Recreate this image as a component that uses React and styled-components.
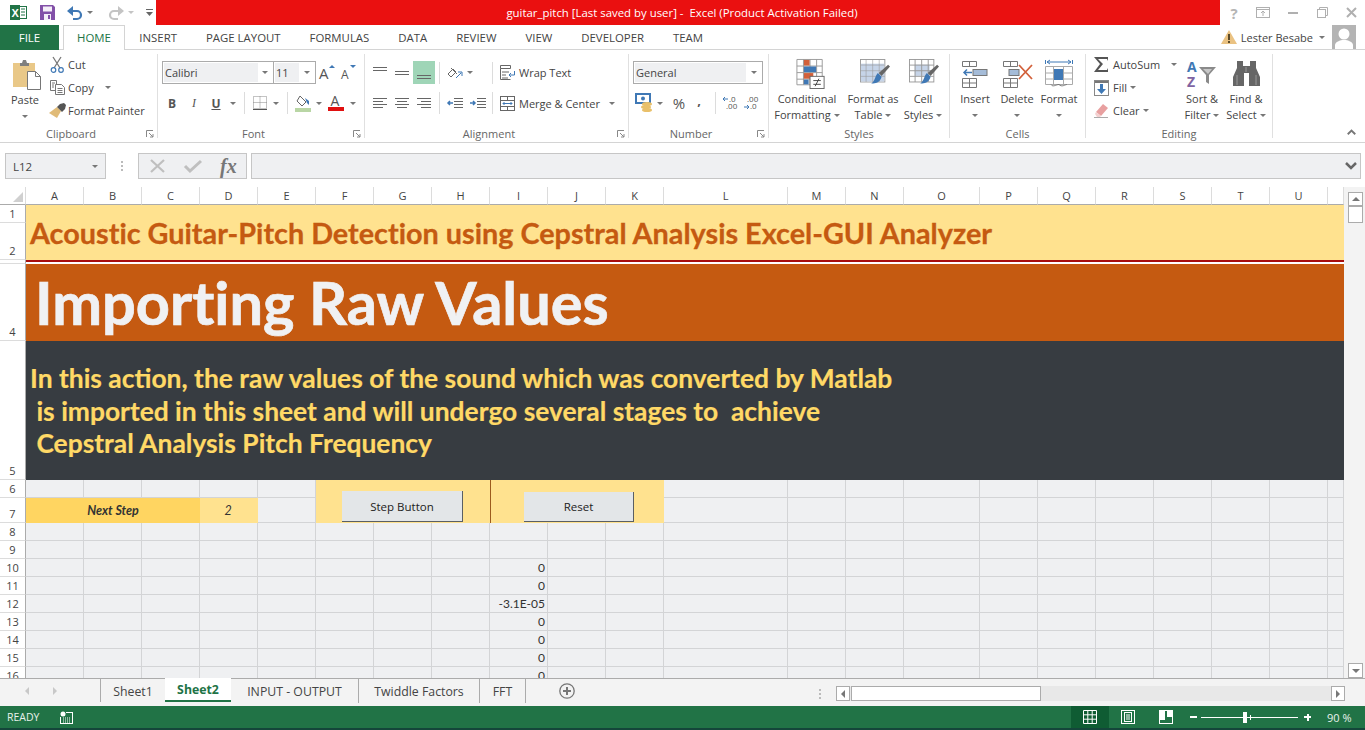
import styled, { createGlobalStyle } from 'styled-components';

const UI = '"Open Sans", "Liberation Sans", sans-serif';
const SHEET = 'Lato, "Liberation Sans", sans-serif';

const GlobalStyle = createGlobalStyle`
  html, body {
    margin: 0;
    background: #ffffff;
    overflow: hidden;
  }
  * {
    box-sizing: border-box;
  }
  svg {
    display: block;
    flex: none;
    overflow: visible;
  }
`;

const Page = styled.div`
  width: 1365px;
  height: 730px;
  display: flex;
  flex-direction: column;
  font-family: ${UI};
  font-size: 11px;
  color: #444;
`;

/* ---------- title bar ---------- */
const TitleBar = styled.div`
  height: 25px;
  display: flex;
  flex: none;
`;
const QuickAccess = styled.div`
  width: 156px;
  display: flex;
  align-items: center;
  padding-left: 10px;
`;
const RedTitle = styled.div`
  flex: 1;
  background: #ea1010;
  color: #fff;
  font-size: 11.4px;
  text-align: center;
  line-height: 26px;
  padding-right: 12px;
  white-space: pre;
`;
const WindowControls = styled.div`
  width: 145px;
  display: flex;
  align-items: center;
  padding-left: 0;
`;
const Slot = styled.div`
  width: ${(p) => p.$w}px;
  height: ${(p) => (p.$h ? `${p.$h}px` : 'auto')};
  display: flex;
  justify-content: center;
  align-items: center;
  flex: none;
  background: ${(p) => (p.$active ? '#9fd5b7' : 'transparent')};
  align-self: stretch;
`;
const Caret = styled.i`
  display: inline-block;
  width: 0;
  height: 0;
  flex: none;
  border-left: 3px solid transparent;
  border-right: 3px solid transparent;
  border-top: 3px solid ${(p) => p.$color || '#777'};
  margin-left: ${(p) => p.$ml || 0}px;
`;

/* ---------- tabs ---------- */
const TabRow = styled.div`
  height: 25px;
  flex: none;
  display: flex;
  border-bottom: 1px solid #d4d4d4;
  position: relative;
`;
const FileTab = styled.div`
  width: 59px;
  height: 25px;
  background: #217346;
  color: #fff;
  font-size: 11.5px;
  text-align: center;
  line-height: 25px;
  margin-right: 4px;
`;
const Tab = styled.div`
  height: ${(p) => (p.$active ? '25px' : '24px')};
  padding: 0 ${(p) => (p.$active ? 13 : 14.5)}px;
  font-size: 11.4px;
  color: ${(p) => (p.$active ? '#217346' : '#444')};
  background: #fff;
  border: ${(p) => (p.$active ? '1px solid #d4d4d4' : '0')};
  border-bottom: 0;
  line-height: ${(p) => (p.$active ? '24px' : '25px')};
  position: relative;
  z-index: 1;
`;
const UserBox = styled.div`
  margin-left: auto;
  display: flex;
  align-items: center;
  height: 24px;
  padding-right: 9px;
  font-size: 11px;
`;
const UserName = styled.span`
  margin: 0 6px 0 4px;
`;

/* ---------- ribbon ---------- */
const Ribbon = styled.div`
  height: 93px;
  flex: none;
  display: flex;
  border-bottom: 1px solid #d4d4d4;
`;
const Group = styled.section`
  width: ${(p) => p.$w}px;
  height: 84px;
  margin-top: 4px;
  border-right: 1px solid #e0e0e0;
  display: flex;
  flex-direction: column;
  flex: none;
`;
const GroupBody = styled.div`
  height: 73px;
  flex: none;
  display: flex;
`;
const GroupLabel = styled.div`
  position: relative;
  height: 14px;
  line-height: 14px;
  text-align: center;
  font-size: 11px;
  color: #666;
  padding-right: ${(p) => (p.$launcher ? 15 : 0)}px;
`;
const Launcher = styled.span`
  position: absolute;
  right: 3px;
  top: 3px;
`;
const Stack = styled.div`
  width: ${(p) => p.$w}px;
  flex: none;
  margin-top: -1px;
  margin-left: ${(p) => p.$ml || 0}px;
  display: flex;
  flex-direction: column;
`;
const StackRow = styled.div`
  height: 23px;
  display: flex;
  align-items: center;
  font-size: 11px;
  white-space: nowrap;
`;
const StackIcon = styled.div`
  width: ${(p) => p.$w || 18}px;
  display: flex;
  justify-content: center;
  margin-right: 3px;
`;
const TwoRows = styled.div`
  padding: 7px 0 0 ${(p) => p.$pl || 0}px;
  display: flex;
  flex-direction: column;
  gap: 8px;
  flex: 1;
`;
const Row = styled.div`
  height: ${(p) => p.$h || 23}px;
  display: flex;
  align-items: center;
  white-space: nowrap;
`;
const Combo = styled.div`
  width: ${(p) => p.$w}px;
  height: 23px;
  flex: none;
  border: 1px solid #ababab;
  margin-right: ${(p) => p.$mr || 0}px;
  display: flex;
  align-items: center;
  padding: 1px;
`;
const ComboField = styled.div`
  flex: 1;
  height: 19px;
  background: #eff0f2;
  line-height: 20px;
  padding-left: 1px;
  font-size: 11px;
`;
const ComboArrow = styled.div`
  width: ${(p) => p.$w || 15}px;
  display: flex;
  justify-content: center;
`;
const Divider = styled.div`
  width: ${(p) => p.$w}px;
  height: 22px;
  flex: none;
  display: flex;
  justify-content: center;
  &::before {
    content: '';
    width: 1px;
    background: #dcdcdc;
  }
`;
const Glyph = styled.span`
  font-family: ${(p) => p.$font || 'inherit'};
  font-size: ${(p) => p.$size || 12}px;
  font-weight: ${(p) => (p.$bold ? 700 : 400)};
  font-style: ${(p) => (p.$italic ? 'italic' : 'normal')};
  text-decoration: ${(p) => (p.$under ? 'underline' : 'none')};
  color: ${(p) => p.$color || '#555'};
  padding-bottom: ${(p) => p.$raise || 0}px;
`;
const BigButton = styled.div`
  width: ${(p) => p.$w}px;
  flex: none;
  display: flex;
  flex-direction: column;
  align-items: center;
  padding-top: ${(p) => p.$pt || 2}px;
  font-size: 11px;
  text-align: center;
`;
const BigIcon = styled.div`
  height: 35px;
  display: flex;
  align-items: center;
  justify-content: center;
  padding-left: ${(p) => p.$pl || 0}px;
`;
const BigLine = styled.div`
  height: 16px;
  line-height: 16px;
  display: flex;
  align-items: center;
  justify-content: center;
  gap: 3px;
  white-space: nowrap;
`;
const Collapse = styled.div`
  flex: 1;
  display: flex;
  justify-content: flex-end;
  align-items: flex-end;
  padding: 0 9px 6px 0;
`;

/* ---------- formula bar ---------- */
const FormulaBar = styled.div`
  height: 26px;
  margin: 10px 4px 8px 5px;
  flex: none;
  display: flex;
  align-items: stretch;
`;
const NameBox = styled.div`
  width: 101px;
  background: #eff0f2;
  border: 1px solid #c6c6c6;
  display: flex;
  align-items: center;
  justify-content: space-between;
  padding: 0 7px 0 7px;
  font-size: 11.5px;
`;
const Grip = styled.div`
  width: 32px;
  display: flex;
  flex-direction: column;
  align-items: center;
  justify-content: center;
  gap: 2px;
  i {
    width: 2px;
    height: 2px;
    background: #bbb;
  }
`;
const FxBox = styled.div`
  width: 109px;
  background: #eff0f2;
  border: 1px solid #c6c6c6;
  display: flex;
  align-items: center;
  padding-left: 1px;
  margin-right: 4px;
`;
const FxCell = styled.div`
  width: 35.5px;
  display: flex;
  justify-content: center;
  align-items: center;
`;
const FormulaInput = styled.div`
  flex: 1;
  background: #eff0f2;
  border: 1px solid #c6c6c6;
  display: flex;
  align-items: center;
  justify-content: flex-end;
  padding-right: 3px;
`;

/* ---------- sheet ---------- */
const SheetArea = styled.div`
  height: 492px;
  flex: none;
  display: flex;
  overflow: hidden;
  border-bottom: 1px solid #ababab;
`;
const Grid = styled.div`
  width: 1344px;
  display: grid;
  grid-template-columns: 26px repeat(11, 58px) 124px 58px 58px 76px repeat(6, 58px) 16px;
  grid-template-rows: 18px 18px 37px 4px 77px 139px 18px 25px repeat(10, 18px);
`;
const Corner = styled.div`
  grid-column: 1;
  grid-row: 1;
  border-bottom: 1px solid #ababab;
  border-right: 1px solid #dcdcdc;
  display: flex;
  align-items: flex-end;
  justify-content: flex-end;
  padding: 0 2px 2px 0;
`;
const ColHead = styled.div`
  grid-column: ${(p) => p.$c + 2};
  grid-row: 1;
  border-bottom: 1px solid #ababab;
  border-right: 1px solid #dcdcdc;
  text-align: center;
  line-height: 18px;
  font-size: 11px;
`;
const RowHead = styled.div`
  grid-column: 1;
  grid-row: ${(p) => p.$r + 1};
  border-bottom: 1px solid #dcdcdc;
  border-right: 1px solid #ababab;
  display: flex;
  justify-content: center;
  align-items: flex-end;
  font-size: 11px;
  line-height: 17px;
`;
const Cell = styled.div`
  grid-column: ${(p) => p.$c + 2};
  grid-row: ${(p) => p.$r + 1};
  background: #eff0f2;
  border-right: 1px solid #d3d4d6;
  border-bottom: 1px solid #d3d4d6;
  font-family: ${SHEET};
  font-size: 12px;
  line-height: 18px;
  text-align: right;
  padding-right: 2px;
  color: #333;
  white-space: nowrap;
  overflow: visible;
`;
const TitleBanner = styled.div`
  grid-column: 2 / -1;
  grid-row: 2 / 4;
  background: #ffe28f;
  color: #c55a11;
  font-family: ${SHEET};
  font-weight: 700;
  font-size: 28.8px;
  font-variant-ligatures: none;
  -webkit-text-stroke: 0.3px #c55a11;
  line-height: 37px;
  padding: 10px 0 0 4px;
  white-space: nowrap;
`;
const RedRule = styled.div`
  grid-column: 2 / -1;
  grid-row: 4;
  background: #fff;
  border-top: 2px solid #a80f0f;
`;
const HeadBanner = styled.div`
  grid-column: 2 / -1;
  grid-row: 5;
  background: #c55a11;
  color: #f0f1f3;
  font-family: ${SHEET};
  font-weight: 700;
  font-size: 59.5px;
  font-variant-ligatures: none;
  -webkit-text-stroke: 0.7px #f0f1f3;
  line-height: 76px;
  padding-left: 9px;
  white-space: nowrap;
`;
const NoteBanner = styled.div`
  grid-column: 2 / -1;
  grid-row: 6;
  background: #373c41;
  color: #ffd966;
  font-family: ${SHEET};
  font-weight: 700;
  font-size: 26.4px;
  -webkit-text-stroke: 0.2px #ffd966;
  line-height: 32.5px;
  padding: 21px 0 0 4px;
  white-space: pre;
`;
const StepLabel = styled.div`
  grid-column: ${(p) => p.$from} / ${(p) => p.$to};
  grid-row: 8;
  background: ${(p) => p.$bg};
  font-family: ${SHEET};
  font-weight: ${(p) => p.$weight};
  font-style: italic;
  font-size: 12.5px;
  line-height: 25px;
  text-align: center;
  padding-right: ${(p) => p.$pr || 0}px;
  color: #333;
`;
const ButtonPanel = styled.div`
  grid-column: 7 / 13;
  grid-row: 7 / 9;
  background: #ffe28f;
  display: grid;
  grid-template-columns: 174px 174px;
`;
const PanelSide = styled.div`
  padding: ${(p) => p.$pt}px 0 0 ${(p) => p.$pl}px;
  border-left: ${(p) => (p.$rule ? '1px solid #9c5b1e' : '0')};
`;
const SheetButton = styled.div`
  width: ${(p) => p.$w}px;
  height: ${(p) => p.$h}px;
  background: #e3e6e8;
  border-right: 1px solid #5a5f63;
  border-bottom: 1px solid #5a5f63;
  font-size: 11.5px;
  color: #222;
  display: flex;
  align-items: center;
  justify-content: center;
`;
const ScrollColumn = styled.div`
  width: 21px;
  padding: 5px 2px 0 4px;
  background: #f3f3f3;
  display: flex;
  flex-direction: column;
  position: relative;
`;
const ScrollBtn = styled.div`
  height: ${(p) => p.$h}px;
  background: #fff;
  border: 1px solid #ababab;
  display: flex;
  align-items: center;
  justify-content: center;
  flex: none;
`;
const ScrollSpacer = styled.div`
  flex: 1;
`;
const UpTriangle = styled.i`
  width: 0;
  height: 0;
  border-left: 4px solid transparent;
  border-right: 4px solid transparent;
  border-bottom: 4px solid #777;
`;
const DownTriangle = styled(UpTriangle)`
  border-bottom: 0;
  border-top: 4px solid #777;
`;

/* ---------- sheet tabs ---------- */
const SheetTabs = styled.div`
  height: 27px;
  flex: none;
  background: #f3f3f3;
  display: flex;
  align-items: flex-start;
`;
const SheetNav = styled.div`
  width: 101px;
  height: 23px;
  margin-top: 0;
  display: flex;
  justify-content: flex-start;
  align-items: center;
  gap: 24px;
  padding-left: 25px;
  border-right: 1px solid #ababab;
`;
const SheetTab = styled.div`
  width: ${(p) => p.$w}px;
  height: 24px;
  margin-top: ${(p) => (p.$active ? '-1px' : 0)};
  display: flex;
  align-items: center;
  justify-content: center;
  font-size: 12.3px;
  font-weight: ${(p) => (p.$active ? 700 : 400)};
  color: ${(p) => (p.$active ? '#217346' : '#444')};
  background: ${(p) => (p.$active ? '#fff' : 'transparent')};
  border-bottom: ${(p) => (p.$active ? '2px solid #217346' : '0')};
  border-right: ${(p) => (p.$sep ? '1px solid #ababab' : '0')};
`;
const AddSheet = styled.div`
  width: 82px;
  height: 23px;
  display: flex;
  align-items: center;
  justify-content: center;
`;
const HScroll = styled.div`
  margin: 7px 0 0 auto;
  width: 550px;
  height: 15px;
  flex: none;
  display: flex;
  align-items: center;
`;
const HGrip = styled(Grip)`
  width: 21px;
  flex: none;
  padding-right: 12px;
`;
const HTrack = styled.div`
  width: 481px;
  flex: none;
  height: 15px;
  background: #e8e8e8;
`;
const HThumb = styled.div`
  width: 190px;
  height: 15px;
  background: #fff;
  border: 1px solid #ababab;
  margin-left: 1px;
`;
const HBtn = styled.div`
  width: 14px;
  height: 15px;
  background: #fff;
  border: 1px solid #ababab;
  display: flex;
  align-items: center;
  justify-content: center;
  flex: none;
`;
const SideTriangle = styled.i`
  width: 0;
  height: 0;
  border-top: 4px solid transparent;
  border-bottom: 4px solid transparent;
  ${(p) => (p.$dir === 'left' ? 'border-right: 4px solid' : 'border-left: 4px solid')} ${(p) => p.$color || '#777'};
`;

/* ---------- status bar ---------- */
const StatusBar = styled.div`
  height: 24px;
  flex: none;
  background: #217346;
  border-bottom: 2px solid #14463a;
  color: #fff;
  display: flex;
  align-items: center;
  font-size: 10.5px;
  padding-left: 7px;
`;
const ReadyText = styled.span`
  width: 53px;
  color: #e8f1ec;
`;
const ViewGroup = styled.div`
  margin-left: auto;
  height: 22px;
  display: flex;
`;
const ViewBtn = styled.div`
  width: 38px;
  display: flex;
  align-items: center;
  justify-content: center;
  background: ${(p) => (p.$active ? '#0f5c33' : 'transparent')};
`;
const Zoom = styled.div`
  width: 180px;
  height: 22px;
  padding-left: 5px;
  display: flex;
  align-items: center;
  white-space: nowrap;
`;
const ZoomTrack = styled.div`
  width: 97px;
  height: 1px;
  flex: none;
  background: #fff;
  margin: 0 6px 0 4px;
  position: relative;
`;
const ZoomThumb = styled.span`
  position: absolute;
  left: 42px;
  top: -5px;
  width: 4px;
  height: 11px;
  background: #fff;
`;
const ZoomTick = styled.span`
  position: absolute;
  left: 49px;
  top: -2px;
  width: 1px;
  height: 5px;
  background: #fff;
`;
const ZoomSign = styled.span`
  width: 7px;
  height: 2px;
  background: #fff;
  position: relative;
  flex: none;
  &::after {
    content: '';
    display: ${(p) => (p.$plus ? 'block' : 'none')};
    position: absolute;
    left: 2.5px;
    top: -2.5px;
    width: 2px;
    height: 7px;
    background: #fff;
  }
`;
const ZoomPct = styled.span`
  margin-left: 16px;
  font-size: 11px;
  color: #e8f1ec;
`;

/* ---------- icons ---------- */
const ExcelLogo = () => (
  <svg width="17" height="17" viewBox="0 0 17 17">
    <rect x="6.5" y="2.5" width="10" height="12" fill="#fff" stroke="#217346" />
    <path d="M11 5h4M11 8h4M11 11h4" stroke="#217346" />
    <rect x="0" y="1" width="10" height="15" fill="#217346" />
    <text x="1.5" y="13" fontSize="11" fontWeight="700" fill="#fff" fontFamily="Liberation Sans">X</text>
  </svg>
);
const SaveIcon = () => (
  <svg width="15" height="15" viewBox="0 0 15 15">
    <path d="M0 0h13l2 2v13H0z" fill="#8250a8" />
    <rect x="3" y="1.5" width="9" height="5" fill="#f4eef8" />
    <rect x="4" y="9" width="7" height="6" fill="#f4eef8" />
    <rect x="8" y="10" width="2" height="4" fill="#8250a8" />
  </svg>
);
const UndoIcon = ({ color, flip }) => (
  <svg width="16" height="14" viewBox="0 0 16 14" transform={flip ? 'scale(-1 1)' : undefined}>
    <path d="M2 5h8a4 4 0 0 1 0 8H6" fill="none" stroke={color} strokeWidth="2.2" />
    <path d="M6 0v10L0 5z" fill={color} />
  </svg>
);
const QatMore = () => (
  <svg width="7" height="8" viewBox="0 0 7 8">
    <path d="M0 0h7v1H0zM0 3h7L3.500 7z" fill="#666" />
  </svg>
);
const Help = () => <Glyph $size={15} $bold $color="#b5b5b5">?</Glyph>;
const DisplayOptions = () => (
  <svg width="14" height="11" viewBox="0 0 14 11" fill="none" stroke="#b0b0b0">
    <rect x=".5" y=".5" width="13" height="10" />
    <path d="M7 9V4M5 6l2-2 2 2M.5 2.500h13" />
  </svg>
);
const Minimize = () => <svg width="10" height="3"><rect width="10" height="2" y="1" fill="#b0b0b0" /></svg>;
const Restore = () => (
  <svg width="11" height="11" viewBox="0 0 11 11" fill="none" stroke="#b0b0b0">
    <rect x=".5" y="2.500" width="8" height="8" />
    <path d="M2.500 2.500v-2h8v8h-2" />
  </svg>
);
const CloseX = () => (
  <svg width="11" height="11" viewBox="0 0 11 11" stroke="#b0b0b0" strokeWidth="2">
    <path d="M1 1l9 9M10 1l-9 9" />
  </svg>
);
const WarnIcon = () => (
  <svg width="16" height="14" viewBox="0 0 16 14">
    <path d="M8 0l8 14H0z" fill="#eac282" />
    <rect x="7" y="4" width="2" height="6" fill="#5a4a2a" />
    <rect x="7" y="11" width="2" height="2" fill="#5a4a2a" />
  </svg>
);
const Avatar = () => (
  <svg width="24" height="24" viewBox="0 0 24 24">
    <rect width="24" height="24" fill="#b4b4b4" />
    <circle cx="12" cy="9" r="5.500" fill="#fff" />
    <path d="M3 24v-4c0-3 5-5 9-5s9 2 9 5v4z" fill="#fff" />
  </svg>
);
const PasteIcon = () => (
  <svg width="29" height="31" viewBox="0 0 29 31">
    <rect x="0" y="4" width="22" height="24" fill="#e9c888" />
    <path d="M7 4h2l1-3h3l1 3h2v3H7z" fill="#7f7f7f" />
    <path d="M14.500 12.500h8l5 5v13h-13z" fill="#fff" stroke="#777" />
    <path d="M22.500 12.500v5h5" fill="none" stroke="#777" />
  </svg>
);
const CutIcon = () => (
  <svg width="15" height="16" viewBox="0 0 15 16" fill="none">
    <path d="M3 0l7 11M11 0L4 11" stroke="#777" strokeWidth="1.300" />
    <circle cx="3.500" cy="13" r="2.300" stroke="#3f78b5" strokeWidth="1.200" />
    <circle cx="11" cy="13" r="2.300" stroke="#3f78b5" strokeWidth="1.200" />
  </svg>
);
const CopyIcon = () => (
  <svg width="15" height="15" viewBox="0 0 15 15" fill="#fff" stroke="#777">
    <path d="M.5.500h6v10h-6z" />
    <path d="M5.500 4.500h6l3 3v7h-9z" />
    <path d="M7.500 8.500h5M7.500 10.500h5M7.500 12.500h5M2 3h3M2 5h2M2 7h2" fill="none" />
  </svg>
);
const PainterIcon = () => (
  <svg width="17" height="15" viewBox="0 0 17 15">
    <path d="M8 4l4 4-4 7-8-5z" fill="#e0bb78" />
    <path d="M9 3l2-2 4-1 2 2-1 4-2 2-1 1-5-5z" fill="#555" />
  </svg>
);
const Launch = () => (
  <svg width="8" height="8" viewBox="0 0 8 8" fill="none" stroke="#888">
    <path d="M.5 7V.5H7" />
    <path d="M3 3l4 4M7 4v3H4" />
  </svg>
);
const GrowFont = ({ shrink }) => (
  <svg width="18" height="15" viewBox="0 0 18 15">
    <text x="0" y="14" fontSize={shrink ? 12 : 15} fill="#555" fontFamily="Open Sans">A</text>
    <path d={shrink ? 'M9 0h6l-3 3z' : 'M10 3h6l-3-3z'} fill="#3f78b5" />
  </svg>
);
const BordersIcon = () => (
  <svg width="14" height="14" viewBox="0 0 14 14" fill="none">
    <path d="M.5.500h13v12h-13zM7 .5v12M.5 6.500h13" stroke="#888" strokeDasharray="1 1" />
    <path d="M0 13.500h14" stroke="#555" />
  </svg>
);
const FillColor = () => (
  <svg width="17" height="17" viewBox="0 0 17 17">
    <path d="M5 1l6 6-4 4-5-5z" fill="#fff" stroke="#666" />
    <path d="M10 3l4 3v4l-2-2z" fill="#3f78b5" />
    <rect y="13" width="16" height="4" fill="#b9d6a5" />
  </svg>
);
const FontColor = () => (
  <svg width="16" height="16" viewBox="0 0 16 16">
    <text x="2.500" y="11" fontSize="14" fill="#555" fontFamily="Open Sans">A</text>
    <rect y="12" width="16" height="4" fill="#e01010" />
  </svg>
);
const Lines = ({ rows }) => (
  <svg width="14" height="14" viewBox="0 0 14 14" stroke="#666">
    {rows.map(([y, x, w]) => (
      <path key={y} d={`M${x} ${y}.5h${w}`} />
    ))}
  </svg>
);
const Orientation = () => (
  <svg width="16" height="15" viewBox="0 0 16 15" fill="none" stroke="#666">
    <path d="M1 9l5-5 3 3-5 5zM4 3l6 6" />
    <path d="M9 13l5-5M11 7h4v4" stroke="#3f78b5" />
  </svg>
);
const WrapIcon = () => (
  <svg width="16" height="15" viewBox="0 0 16 15" fill="none" stroke="#666">
    <path d="M.5.500h10v3h-10zM.5 3.500v11h10" />
    <path d="M2 7h7M2 10h4M2 13h6" />
    <path d="M14.500 6v4h-5M11 8l-2 2 2 2" stroke="#3f78b5" />
  </svg>
);
const MergeIcon = () => (
  <svg width="15" height="15" viewBox="0 0 15 15" fill="none" stroke="#666">
    <rect x=".5" y=".5" width="14" height="14" />
    <path d="M.5 4.500h14M.5 10.500h14M7.500.5v4M7.500 10.500v4" />
    <path d="M3 7.500h9M4.500 6L3 7.500 4.500 9M10.500 6L12 7.500 10.500 9" stroke="#3f78b5" />
  </svg>
);
const IndentIcon = ({ out }) => (
  <svg width="16" height="11" viewBox="0 0 16 11" fill="none" stroke="#666">
    <path d="M7 .5h9M7 3.500h9M7 6.500h9M7 9.500h9" />
    <path d={out ? 'M6 5H1M3 3L1 5l2 2' : 'M0 5h5M3 3l2 2-2 2'} stroke="#3f78b5" strokeWidth="1.500" />
  </svg>
);
const CurrencyIcon = () => (
  <svg width="17" height="18" viewBox="0 0 17 18">
    <rect width="14" height="9" fill="#fff" stroke="#3f78b5" strokeWidth="2" />
    <circle cx="7" cy="4.500" r="2" fill="#3f78b5" />
    <ellipse cx="11" cy="10" rx="5" ry="2" fill="#e9c06a" />
    <ellipse cx="10" cy="13" rx="5" ry="2" fill="#e9c06a" />
    <ellipse cx="11" cy="16" rx="5" ry="2" fill="#e9c06a" />
  </svg>
);
const DecimalIcon = ({ more }) => (
  <svg width="16" height="14" viewBox="0 0 16 14">
    <text x={more ? 6 : 3} y="6" fontSize="8" fill="#555" fontFamily="Open Sans">{more ? '.0' : '.00'}</text>
    <text x={more ? 3 : 6} y="13" fontSize="8" fill="#555" fontFamily="Open Sans">{more ? '.00' : '.0'}</text>
    <path d={more ? 'M5 3H0M2 1L0 3l2 2' : 'M0 11h5M3 9l2 2-2 2'} fill="none" stroke="#3f78b5" />
  </svg>
);
const CondFormatIcon = () => (
  <svg width="29" height="30" viewBox="0 0 30 32">
    <path d="M.5.500h27v27H.5zM.5 7.500h27M.5 14.500h27M.5 21.500h27M7.500.5v27M14.500.5v27M21.500.5v27" fill="#fff" stroke="#999" />
    <rect x="8" y="1" width="6" height="6" fill="#d2603a" />
    <rect x="8" y="8" width="13" height="6" fill="#3f78b5" />
    <rect x="8" y="15" width="10" height="6" fill="#d2603a" />
    <rect x="8" y="22" width="5" height="5" fill="#3f78b5" />
    <rect x="14.500" y="18.500" width="15" height="13" fill="#fff" stroke="#666" />
    <path d="M18 23h8M18 27h8M24 21l-4 8" stroke="#444" fill="none" />
  </svg>
);
const TableStyleIcon = ({ filled }) => (
  <svg width="30" height="30" viewBox="0 0 32 32">
    <rect x=".5" y=".5" width="26" height="24" fill="#fff" stroke="#999" />
    <rect x={filled ? 1 : 6} y={filled ? 5 : 6} width={filled ? 25 : 16} height={filled ? 19 : 12} fill="#c6d4e8" />
    <path d="M.5 6.500h26M.5 12.500h26M.5 18.500h26M6.500.5v24M13.500.5v24M20.500.5v24" stroke="#999" fill="none" opacity={filled ? 0.6 : 1} />
    <path d="M30 6l2 2-9 10-3-3z" fill="#666" />
    <path d="M19 15l4 4c-1 5-6 8-11 7 4-2 4-8 7-11z" fill="#3f78b5" />
  </svg>
);
const InsertCells = () => (
  <svg width="28" height="28" viewBox="0 0 28 28" fill="none">
    <path d="M1.500 1.500h14v5h-14zM8.500 1.500v5M1.500 18.500h14v9h-14zM1.500 23h14M8.500 18.500v9" stroke="#777" />
    <rect x="12" y="9.500" width="14" height="6" fill="#a5bcd8" stroke="#777" />
    <path d="M11 12.500H3M6 9.500l-3 3 3 3" stroke="#3f78b5" strokeWidth="1.500" />
  </svg>
);
const DeleteCells = () => (
  <svg width="31" height="28" viewBox="0 0 31 28" fill="none">
    <path d="M1.500 1.500h14v5h-14zM8.500 1.500v5M1.500 18.500h14v9h-14zM1.500 23h14M8.500 18.500v9" stroke="#777" />
    <rect x="7" y="9.500" width="10" height="6" fill="#a5bcd8" stroke="#777" />
    <path d="M17 5l13 14M30 5L17 19" stroke="#d2603a" strokeWidth="1.800" />
  </svg>
);
const FormatCells = () => (
  <svg width="28" height="29" viewBox="0 0 28 29" fill="none">
    <path d="M.5 1v4M27.500 1v4M2 3h24M5 1L2 3l3 2M23 1l3 2-3 2" stroke="#3f78b5" />
    <path d="M.5 7.500h27v18H.5zM8.500 7.500v18M18.500 7.500v18M.5 14h27M.5 20h27" stroke="#aaa" />
    <rect x="9" y="10" width="9" height="11" fill="#3f78b5" />
    <path d="M6 25.500c2 3 5 0 8 0M14 25.500c3 3 6 0 8 0" stroke="#777" />
  </svg>
);
const SigmaIcon = () => (
  <svg width="15" height="15" viewBox="0 0 15 15">
    <path d="M0 0h14v4l-1-2H4l5 5-5 6h9l1-2v4H0l6-8z" fill="#555" />
  </svg>
);
const FillIcon = () => (
  <svg width="15" height="16" viewBox="0 0 15 16">
    <rect x=".5" y=".5" width="14" height="15" fill="#fff" stroke="#888" />
    <rect x="1" y="1" width="13" height="2" fill="#777" />
    <path d="M6 4h3v5h3l-4.500 5L3 9h3z" fill="#3f78b5" />
  </svg>
);
const ClearIcon = () => (
  <svg width="15" height="14" viewBox="0 0 15 14">
    <path d="M9 0l5 4-7 8-5-4z" fill="#e8a0a0" />
    <path d="M2 8l5 4-1 1H3L1 10z" fill="#f4d0d0" />
    <path d="M0 13.500h14" stroke="#aaa" />
  </svg>
);
const SortIcon = () => (
  <svg width="31" height="28" viewBox="0 0 31 28">
    <text x="0" y="12" fontSize="14" fontWeight="700" fill="#3f78b5" fontFamily="Open Sans">A</text>
    <text x="0" y="27" fontSize="14" fontWeight="700" fill="#8064a2" fontFamily="Open Sans">Z</text>
    <path d="M12 7h17l-7 8v9l-3-2v-7z" fill="#8a8a8a" />
    <path d="M16 9h9l-4 5z" fill="#c8c8c8" />
  </svg>
);
const FindIcon = () => (
  <svg width="27" height="25" viewBox="0 0 27 25">
    <path d="M4 0h6v5h7V0h6v7l4 9v9H16V12h-5v13H0v-9l4-9z" fill="#666" />
    <path d="M13 6v5M4 14v10M23 14v10" stroke="#999" />
  </svg>
);
const Chevron = ({ color = '#666', w = 12, up }) => (
  <svg width={w} height="8" viewBox="0 0 12 8">
    <path d={up ? 'M1 7l5-5 5 5' : 'M1 1l5 5 5-5'} fill="none" stroke={color} strokeWidth="2.500" />
  </svg>
);
const CrossIcon = () => (
  <svg width="15" height="14" viewBox="0 0 15 14">
    <path d="M1 1l13 12M14 1L1 13" stroke="#bfbfbf" strokeWidth="2.200" />
  </svg>
);
const CheckIcon = () => (
  <svg width="18" height="14" viewBox="0 0 18 14">
    <path d="M1 7l5 5L17 2" fill="none" stroke="#bfbfbf" strokeWidth="3" />
  </svg>
);
const CornerMark = () => (
  <svg width="10" height="10" viewBox="0 0 10 10"><path d="M10 0v10H0z" fill="#d0d0d0" /></svg>
);
const PlusCircle = () => (
  <svg width="16" height="16" viewBox="0 0 16 16" fill="none" stroke="#777">
    <circle cx="8" cy="8" r="7.200" strokeWidth="1.300" />
    <path d="M4 8h8M8 4v8" strokeWidth="2" />
  </svg>
);
const MacroIcon = () => (
  <svg width="13" height="13" viewBox="0 0 13 13">
    <circle cx="3" cy="3" r="2.500" fill="#fff" />
    <path d="M6 1h7v12H0V6h1v6h11V2H6z" fill="#fff" />
    <path d="M3 7h8M3 9h8M3 11h8" stroke="#fff" strokeDasharray="1 1" />
  </svg>
);
const GridView = () => (
  <svg width="14" height="14" viewBox="0 0 14 14" fill="none" stroke="#fff">
    <path d="M.5.500h13v13H.5zM.5 4.800h13M.5 9.200h13M4.800.5v13M9.200.5v13" />
  </svg>
);
const PageView = () => (
  <svg width="14" height="14" viewBox="0 0 14 14" fill="none" stroke="#fff">
    <rect x=".5" y=".5" width="13" height="13" />
    <rect x="3.500" y="2.500" width="7" height="9" />
    <path d="M5 5h4M5 7h4M5 9h4" />
  </svg>
);
const BreakView = () => (
  <svg width="14" height="14" viewBox="0 0 14 14">
    <rect x=".5" y=".5" width="13" height="13" fill="none" stroke="#fff" />
    <path d="M1 1h5v9H1zM8 1h5v6H8z" fill="#fff" />
  </svg>
);

const COLS = 'ABCDEFGHIJKLMNOPQRSTUV'.split('');
const VALUES = { 10: '0', 11: '0', 12: '-3.1E-05', 13: '0', 14: '0', 15: '0', 16: '0' };
const ROW_NUMS = [1, 2, 3, 4, 5, 6, 7, 8, 9, 10, 11, 12, 13, 14, 15, 16];
const TABS = ['INSERT', 'PAGE LAYOUT', 'FORMULAS', 'DATA', 'REVIEW', 'VIEW', 'DEVELOPER', 'TEAM'];

// cells that sit under the merged blocks in rows 6 and 7
const isCovered = (r, c) => (r <= 7 && c >= 5 && c <= 10) || (r === 7 && c < 4);

const App = () => {
  const plainRows = ROW_NUMS.filter((r) => r >= 6);

  return (
    <Page>
      <GlobalStyle />
      <TitleBar>
        <QuickAccess>
          <ExcelLogo />
          <Slot $w={40}><SaveIcon /></Slot>
          <UndoIcon color="#3f78b5" />
          <Slot $w={14}><Caret /></Slot>
          <Slot $w={11} />
          <UndoIcon color="#c4c4c4" flip />
          <Slot $w={14}><Caret $color="#c4c4c4" /></Slot>
          <Slot $w={8} />
          <QatMore />
        </QuickAccess>
        <RedTitle>guitar_pitch [Last saved by user] -  Excel (Product Activation Failed)</RedTitle>
        <WindowControls>
          <Slot $w={28}><Help /></Slot>
          <Slot $w={30}><DisplayOptions /></Slot>
          <Slot $w={30}><Minimize /></Slot>
          <Slot $w={29}><Restore /></Slot>
          <Slot $w={29}><CloseX /></Slot>
        </WindowControls>
      </TitleBar>

      <TabRow>
        <FileTab>FILE</FileTab>
        <Tab $active>HOME</Tab>
        {TABS.map((t) => <Tab key={t}>{t}</Tab>)}
        <UserBox>
          <WarnIcon />
          <UserName>Lester Besabe</UserName>
          <Caret />
          <Slot $w={7} />
          <Avatar />
        </UserBox>
      </TabRow>

      <Ribbon>
        <Group $w={158}>
          <GroupBody>
            <BigButton $w={50} $pt={3}>
              <BigIcon $pl={4}><PasteIcon /></BigIcon>
              <BigLine>Paste</BigLine>
              <BigLine><Caret /></BigLine>
            </BigButton>
            <Stack $w={105}>
              <StackRow><StackIcon $w={15}><CutIcon /></StackIcon>Cut</StackRow>
              <StackRow><StackIcon $w={15}><CopyIcon /></StackIcon>Copy<Caret $ml={11} /></StackRow>
              <StackRow><StackIcon $w={15}><PainterIcon /></StackIcon>Format Painter</StackRow>
            </Stack>
          </GroupBody>
          <GroupLabel $launcher>Clipboard<Launcher><Launch /></Launcher></GroupLabel>
        </Group>

        <Group $w={207}>
          <GroupBody>
            <TwoRows>
              <Row>
                <Slot $w={4} />
                <Combo $w={112} $mr={-1}>
                  <ComboField>Calibri</ComboField>
                  <ComboArrow $w={14}><Caret /></ComboArrow>
                </Combo>
                <Combo $w={43}>
                  <ComboField>11</ComboField>
                  <ComboArrow><Caret /></ComboArrow>
                </Combo>
                <Slot $w={24}><GrowFont /></Slot>
                <Slot $w={20}><GrowFont shrink /></Slot>
              </Row>
              <Row $h={22}>
                <Slot $w={3} />
                <Slot $w={22}><Glyph $bold $size={12}>B</Glyph></Slot>
                <Slot $w={22}><Glyph $italic $size={12} $font="Liberation Serif">I</Glyph></Slot>
                <Slot $w={22}><Glyph $bold $under $size={12}>U</Glyph></Slot>
                <Slot $w={12}><Caret /></Slot>
                <Divider $w={10} />
                <Slot $w={21}><BordersIcon /></Slot>
                <Slot $w={12}><Caret /></Slot>
                <Divider $w={10} />
                <Slot $w={22}><FillColor /></Slot>
                <Slot $w={10}><Caret /></Slot>
                <Slot $w={24}><FontColor /></Slot>
                <Slot $w={10}><Caret /></Slot>
              </Row>
            </TwoRows>
          </GroupBody>
          <GroupLabel $launcher>Font<Launcher><Launch /></Launcher></GroupLabel>
        </Group>

        <Group $w={264}>
          <GroupBody>
            <TwoRows>
              <Row>
                <Slot $w={4} />
                <Slot $w={22}><Lines rows={[[1, 0, 14], [4, 0, 14]]} /></Slot>
                <Slot $w={22}><Lines rows={[[5, 0, 14], [8, 0, 14]]} /></Slot>
                <Slot $w={22} $active><Lines rows={[[9, 0, 14], [12, 0, 14]]} /></Slot>
                <Divider $w={8} />
                <Slot $w={23}><Orientation /></Slot>
                <Slot $w={8}><Caret /></Slot>
                <Slot $w={14} />
                <Divider $w={8} />
                <Slot $w={23}><WrapIcon /></Slot>
                Wrap Text
              </Row>
              <Row $h={22}>
                <Slot $w={4} />
                <Slot $w={22}><Lines rows={[[2, 0, 14], [5, 0, 10], [8, 0, 14], [11, 0, 10]]} /></Slot>
                <Slot $w={22}><Lines rows={[[2, 0, 14], [5, 2, 10], [8, 0, 14], [11, 2, 10]]} /></Slot>
                <Slot $w={22}><Lines rows={[[2, 0, 14], [5, 4, 10], [8, 0, 14], [11, 4, 10]]} /></Slot>
                <Divider $w={8} />
                <Slot $w={24}><IndentIcon out /></Slot>
                <Slot $w={21}><IndentIcon /></Slot>
                <Divider $w={8} />
                <Slot $w={23}><MergeIcon /></Slot>
                Merge &amp; Center
                <Caret $ml={9} />
              </Row>
            </TwoRows>
          </GroupBody>
          <GroupLabel $launcher>Alignment<Launcher><Launch /></Launcher></GroupLabel>
        </Group>

        <Group $w={140}>
          <GroupBody>
            <TwoRows $pl={4}>
              <Row>
                <Combo $w={130}>
                  <ComboField>General</ComboField>
                  <ComboArrow><Caret /></ComboArrow>
                </Combo>
              </Row>
              <Row $h={22}>
                <Slot $w={22}><CurrencyIcon /></Slot>
                <Slot $w={10}><Caret /></Slot>
                <Slot $w={28}><Glyph $size={15}>%</Glyph></Slot>
                <Slot $w={12}><Glyph $size={13} $bold $raise={7}>,</Glyph></Slot>
                <Divider $w={20} />
                <Slot $w={12}><DecimalIcon more /></Slot>
                <Slot $w={30}><DecimalIcon /></Slot>
              </Row>
            </TwoRows>
          </GroupBody>
          <GroupLabel $launcher>Number<Launcher><Launch /></Launcher></GroupLabel>
        </Group>

        <Group $w={181}>
          <GroupBody>
            <BigButton $w={76}>
              <BigIcon $pl={6}><CondFormatIcon /></BigIcon>
              <BigLine>Conditional</BigLine>
              <BigLine>Formatting<Caret /></BigLine>
            </BigButton>
            <BigButton $w={56}>
              <BigIcon $pl={4}><TableStyleIcon filled /></BigIcon>
              <BigLine>Format as</BigLine>
              <BigLine>Table<Caret /></BigLine>
            </BigButton>
            <BigButton $w={44}>
              <BigIcon $pl={2}><TableStyleIcon /></BigIcon>
              <BigLine>Cell</BigLine>
              <BigLine>Styles<Caret /></BigLine>
            </BigButton>
          </GroupBody>
          <GroupLabel>Styles</GroupLabel>
        </Group>

        <Group $w={136}>
          <GroupBody>
            <BigButton $w={50}>
              <BigIcon><InsertCells /></BigIcon>
              <BigLine>Insert</BigLine>
              <BigLine><Caret /></BigLine>
            </BigButton>
            <BigButton $w={34}>
              <BigIcon><DeleteCells /></BigIcon>
              <BigLine>Delete</BigLine>
              <BigLine><Caret /></BigLine>
            </BigButton>
            <BigButton $w={50}>
              <BigIcon><FormatCells /></BigIcon>
              <BigLine>Format</BigLine>
              <BigLine><Caret /></BigLine>
            </BigButton>
          </GroupBody>
          <GroupLabel>Cells</GroupLabel>
        </Group>

        <Group $w={187}>
          <GroupBody>
            <Stack $w={90} $ml={6}>
              <StackRow><StackIcon><SigmaIcon /></StackIcon>AutoSum<Caret $ml={11} /></StackRow>
              <StackRow><StackIcon><FillIcon /></StackIcon>Fill<Caret $ml={3} /></StackRow>
              <StackRow><StackIcon><ClearIcon /></StackIcon>Clear<Caret $ml={3} /></StackRow>
            </Stack>
            <BigButton $w={40}>
              <BigIcon><SortIcon /></BigIcon>
              <BigLine>Sort &amp;</BigLine>
              <BigLine>Filter<Caret /></BigLine>
            </BigButton>
            <BigButton $w={48}>
              <BigIcon><FindIcon /></BigIcon>
              <BigLine>Find &amp;</BigLine>
              <BigLine>Select<Caret /></BigLine>
            </BigButton>
          </GroupBody>
          <GroupLabel>Editing</GroupLabel>
        </Group>
        <Collapse><Chevron up w={9} color="#777" /></Collapse>
      </Ribbon>

      <FormulaBar>
        <NameBox>L12<Caret /></NameBox>
        <Grip><i /><i /><i /></Grip>
        <FxBox>
          <FxCell><CrossIcon /></FxCell>
          <FxCell><CheckIcon /></FxCell>
          <FxCell><Glyph $font="Liberation Serif" $italic $bold $size={20} $color="#777">fx</Glyph></FxCell>
        </FxBox>
        <FormulaInput><Chevron /></FormulaInput>
      </FormulaBar>

      <SheetArea>
        <Grid>
          <Corner><CornerMark /></Corner>
          {COLS.map((name, c) => <ColHead key={name} $c={c}>{c === 21 ? '' : name}</ColHead>)}
          {ROW_NUMS.map((r) => <RowHead key={r} $r={r}>{r === 3 ? '' : r}</RowHead>)}

          <TitleBanner>Acoustic Guitar-Pitch Detection using Cepstral Analysis Excel-GUI Analyzer</TitleBanner>
          <RedRule />
          <HeadBanner>Importing Raw Values</HeadBanner>
          <NoteBanner>{'In this action, the raw values of the sound which was converted by Matlab\n is imported in this sheet and will undergo several stages to  achieve\n Cepstral Analysis Pitch Frequency'}</NoteBanner>

          {plainRows.map((r) =>
            COLS.map((name, c) =>
              isCovered(r, c) ? null : (
                <Cell key={name + r} $r={r} $c={c}>{c === 8 ? VALUES[r] : ''}</Cell>
              ),
            ),
          )}

          <StepLabel $from={2} $to={5} $bg="#ffd561" $weight={700}>Next Step</StepLabel>
          <StepLabel $from={5} $to={6} $bg="#ffe28f" $weight={400} $pr={2}>2</StepLabel>
          <ButtonPanel>
            <PanelSide $pt={11} $pl={26}><SheetButton $w={121} $h={31}>Step Button</SheetButton></PanelSide>
            <PanelSide $pt={12} $pl={33} $rule><SheetButton $w={110} $h={30}>Reset</SheetButton></PanelSide>
          </ButtonPanel>
        </Grid>
        <ScrollColumn>
          <ScrollBtn $h={14}><UpTriangle /></ScrollBtn>
          <ScrollBtn $h={17}></ScrollBtn>
          <ScrollSpacer />
          <ScrollBtn $h={15}><DownTriangle /></ScrollBtn>
        </ScrollColumn>
      </SheetArea>

      <SheetTabs>
        <SheetNav>
          <SideTriangle $dir="left" $color="#c8c8c8" />
          <SideTriangle $color="#c8c8c8" />
        </SheetNav>
        <SheetTab $w={64}>Sheet1</SheetTab>
        <SheetTab $w={66} $active>Sheet2</SheetTab>
        <SheetTab $w={128} $sep>INPUT - OUTPUT</SheetTab>
        <SheetTab $w={121} $sep>Twiddle Factors</SheetTab>
        <SheetTab $w={46} $sep>FFT</SheetTab>
        <AddSheet><PlusCircle /></AddSheet>
        <HScroll>
          <HGrip><i /><i /><i /></HGrip>
          <HBtn><SideTriangle $dir="left" /></HBtn>
          <HTrack><HThumb /></HTrack>
          <HBtn><SideTriangle /></HBtn>
          <Slot $w={20} />
        </HScroll>
      </SheetTabs>

      <StatusBar>
        <ReadyText>READY</ReadyText>
        <MacroIcon />
        <ViewGroup>
          <ViewBtn $active><GridView /></ViewBtn>
          <ViewBtn><PageView /></ViewBtn>
          <ViewBtn><BreakView /></ViewBtn>
        </ViewGroup>
        <Zoom>
          <ZoomSign />
          <ZoomTrack><ZoomThumb /><ZoomTick /></ZoomTrack>
          <ZoomSign $plus />
          <ZoomPct>90 %</ZoomPct>
        </Zoom>
      </StatusBar>
    </Page>
  );
};

export default App;
